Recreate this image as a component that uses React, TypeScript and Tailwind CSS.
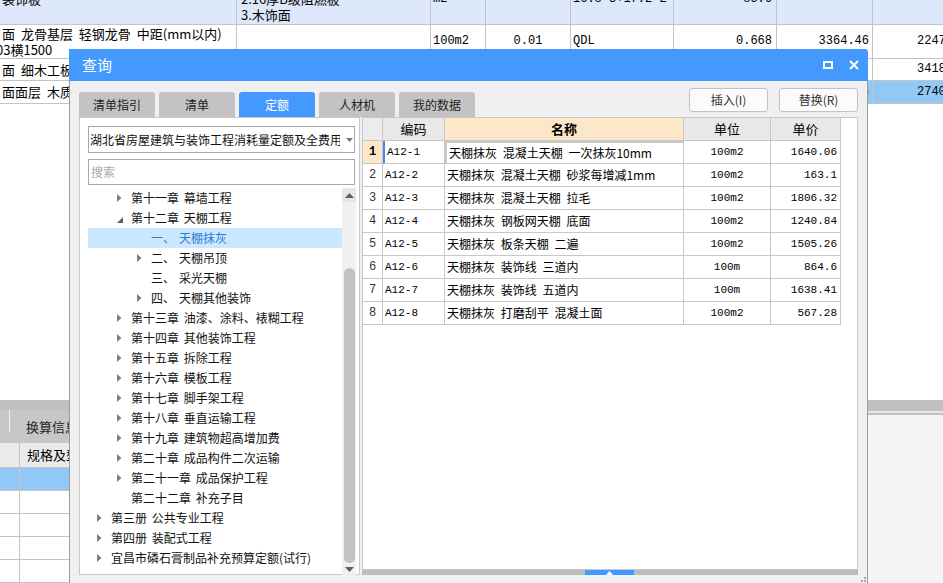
import React from "react";

// 查询 dialog over a spreadsheet (GLD style)

const cjk = "font-['Noto_Sans_CJK_SC',sans-serif]";
const mono = "font-['Liberation_Mono','Noto_Sans_CJK_SC',monospace]";

type Node = { l: number; t: string; t2?: string; a?: "r" | "d"; sel?: boolean };

const tree: Node[] = [
  { l: 1, t: "第十一章 幕墙工程", a: "r" },
  { l: 1, t: "第十二章 天棚工程", a: "d" },
  { l: 2, t: "一、", t2: "天棚抹灰", sel: true },
  { l: 2, t: "二、", t2: "天棚吊顶", a: "r" },
  { l: 2, t: "三、", t2: "采光天棚" },
  { l: 2, t: "四、", t2: "天棚其他装饰", a: "r" },
  { l: 1, t: "第十三章 油漆、涂料、裱糊工程", a: "r" },
  { l: 1, t: "第十四章 其他装饰工程", a: "r" },
  { l: 1, t: "第十五章 拆除工程", a: "r" },
  { l: 1, t: "第十六章 模板工程", a: "r" },
  { l: 1, t: "第十七章 脚手架工程", a: "r" },
  { l: 1, t: "第十八章 垂直运输工程", a: "r" },
  { l: 1, t: "第十九章 建筑物超高增加费", a: "r" },
  { l: 1, t: "第二十章 成品构件二次运输", a: "r" },
  { l: 1, t: "第二十一章 成品保护工程", a: "r" },
  { l: 1, t: "第二十二章 补充子目" },
  { l: 0, t: "第三册 公共专业工程", a: "r" },
  { l: 0, t: "第四册 装配式工程", a: "r" },
  { l: 0, t: "宜昌市磷石膏制品补充预算定额(试行)", a: "r" },
];

const rows = [
  ["A12-1", "天棚抹灰 混凝土天棚 一次抹灰10mm", "100m2", "1640.06"],
  ["A12-2", "天棚抹灰 混凝土天棚 砂浆每增减1mm", "100m2", "163.1"],
  ["A12-3", "天棚抹灰 混凝土天棚 拉毛", "100m2", "1806.32"],
  ["A12-4", "天棚抹灰 钢板网天棚 底面", "100m2", "1240.84"],
  ["A12-5", "天棚抹灰 板条天棚 二遍", "100m2", "1505.26"],
  ["A12-6", "天棚抹灰 装饰线 三道内", "100m", "864.6"],
  ["A12-7", "天棚抹灰 装饰线 五道内", "100m", "1638.41"],
  ["A12-8", "天棚抹灰 打磨刮平 混凝土面", "100m2", "567.28"],
];

const tabs = ["清单指引", "清单", "定额", "人材机", "我的数据"];

function Background() {
  const cell = "overflow-hidden border-r border-b border-[#c4c4c4]";
  const grid = "grid grid-cols-[237px_194px_55px_85px_103px_103px_96px_103px]";
  return (
    <div className={`flex h-full flex-col text-[13px] text-black ${cjk}`}>
      <div className={`${grid} h-[26px] bg-[#dde8fb]`}>
        <div className={cell}>
          <div className="-mt-[9px] pl-[2px] leading-[16px]">装饰板</div>
        </div>
        <div className={cell}>
          <div className="-mt-[9px] pl-[4px] leading-[16px]">
            <div>2.16厚B级阻燃板</div>
            <div>3.木饰面</div>
          </div>
        </div>
        <div className={cell}>
          <div className={`-mt-[9px] pl-[2px] leading-[16px] ${mono} text-[12px]`}>m2</div>
        </div>
        <div className={cell} />
        <div className={cell}>
          <div className={`-mt-[9px] pl-[2px] leading-[16px] ${mono} text-[12px]`}>16.8*3+17.2*2</div>
        </div>
        <div className={cell}>
          <div className={`-mt-[9px] pr-[4px] text-right leading-[16px] ${mono} text-[12px]`}>85.6</div>
        </div>
        <div className={cell} />
        <div className={cell} />
      </div>

      <div className={`${grid} h-[35px] bg-white`}>
        <div className={`${cell} pt-[1px] leading-[16px] [word-spacing:3px]`}>
          <div className="pl-[2px]">面 龙骨基层 轻钢龙骨 中距(mm以内)</div>
          <div className="-ml-[4px]">03横1500</div>
        </div>
        <div className={cell} />
        <div className={`${cell} flex items-center pl-[2px] ${mono} text-[12px]`}>100m2</div>
        <div className={`${cell} flex items-center justify-center ${mono} text-[12px]`}>0.01</div>
        <div className={`${cell} flex items-center pl-[2px] ${mono} text-[12px]`}>QDL</div>
        <div className={`${cell} flex items-center justify-end pr-[4px] ${mono} text-[12px]`}>0.668</div>
        <div className={`${cell} flex items-center justify-end pr-[3px] ${mono} text-[12px]`}>3364.46</div>
        <div className={`${cell} flex items-center pl-[44px] ${mono} text-[12px]`}>22473.59</div>
      </div>

      <div className={`${grid} h-[23px] bg-white`}>
        <div className={`${cell} flex items-center pl-[2px] [word-spacing:3px]`}>面 细木工板基层 钉在龙骨上</div>
        <div className={cell} />
        <div className={cell} />
        <div className={cell} />
        <div className={cell} />
        <div className={cell} />
        <div className={cell} />
        <div className={`${cell} flex items-center pl-[44px] ${mono} text-[12px]`}>3418.25</div>
      </div>

      <div className={`${grid} h-[24px] bg-white`}>
        <div className={`${cell} flex items-center pl-[2px] [word-spacing:3px]`}>面面层 木质装饰板</div>
        <div className={cell} />
        <div className={cell} />
        <div className={cell} />
        <div className={cell} />
        <div className={cell} />
        <div className={`${cell} flex items-center justify-end bg-[#92c8f6] pr-[3px] ${mono} text-[12px]`}>5423.15</div>
        <div className={`${cell} flex items-center bg-[#92c8f6] pl-[44px] ${mono} text-[12px]`}>2740.66</div>
      </div>

      <div className="h-[309px] bg-white" />

      <div className="flex flex-1">
        <div className="flex w-[500px] flex-col">
          <div className="h-[10px] bg-[#c0c0c0]" />
          <div className="flex h-[33px] items-center bg-[#c6c6c6]">
            <div className="ml-[9px] h-[22px] w-[1px] self-start bg-[#f2f2f2]" />
            <span className="ml-[16px] text-[13px] text-[#222]">换算信息</span>
          </div>
          <div className="flex h-[25px] border-b border-[#c4c4c4] bg-[#ebebeb]">
            <div className="w-[20px] border-r border-[#c4c4c4]" />
            <div className="flex items-center pl-[7px] text-[13px]">规格及型号</div>
          </div>
          <div className="flex h-[23px] border-b border-[#c4c4c4] bg-[#92c8f6]">
            <div className="w-[20px] border-r border-[#c4c4c4]" />
          </div>
          {[0, 1, 2, 3].map((i) => (
            <div key={i} className="flex h-[23px] border-b border-[#c4c4c4] bg-white">
              <div className="w-[20px] border-r border-[#c4c4c4]" />
            </div>
          ))}
        </div>
        <div className="flex flex-1 flex-col">
          <div className="h-[11px] bg-[#c0c0c0]" />
          <div className="h-[2px] bg-[#e8e8e8]" />
          <div className="h-[2px] bg-[#c0c0c0]" />
          <div className="flex-1 bg-[#f4f4f4]" />
        </div>
      </div>
    </div>
  );
}

function Arrow({ kind }: { kind?: "r" | "d" }) {
  if (kind === "r")
    return (
      <svg width="5" height="8" viewBox="0 0 5 8">
        <polygon points="0,0 4.5,4 0,8" fill="#7d7d7d" />
      </svg>
    );
  if (kind === "d")
    return (
      <svg width="6" height="6" viewBox="0 0 6 6" className="mt-[4px]">
        <polygon points="6,0 6,6 0,6" fill="#5f5f5f" />
      </svg>
    );
  return null;
}

function LeftPanel() {
  return (
    <div className={`flex w-[281px] flex-col border border-[#c8c8c8] bg-white ${cjk} text-[12px]`}>
      <div className="pl-[8px] pt-[8px]">
        <div className="flex h-[27px] w-[267px] items-center border border-[#a9a9a9]">
          <div className="w-[251px] overflow-hidden whitespace-nowrap pl-[1px] text-[#111]">
            湖北省房屋建筑与装饰工程消耗量定额及全费用基价表
          </div>
          <svg width="7" height="4" viewBox="0 0 7 4" className="ml-[6px]">
            <polygon points="0,0 7,0 3.5,4" fill="#777" />
          </svg>
        </div>
        <div className="mt-[6px] flex h-[26px] w-[267px] items-center border border-[#a9a9a9] pl-[2px] text-[#a8a8a8]">
          搜索
        </div>
      </div>
      <div className="mt-[3px] flex flex-1 pl-[8px]">
        <div className="w-[254px] overflow-hidden">
          {tree.map((n, i) => (
            <div
              key={i}
              className={`flex h-[20px] items-center whitespace-nowrap [word-spacing:2px] ${n.sel ? "bg-[#cce8ff] text-[#2f7bd9]" : "text-[#111]"}`}
            >
              <div
                className="flex h-full shrink-0 items-center"
                style={{ width: n.l * 20 + 23, paddingLeft: n.l * 20 + 9 }}
              >
                <Arrow kind={n.a} />
              </div>
              <span>{n.t}</span>
              {n.t2 && <span className="ml-[4px]">{n.t2}</span>}
            </div>
          ))}
        </div>
        <div className="flex w-[14px] flex-col bg-[#f0f0f0]">
          <div className="flex h-[14px] items-center justify-center bg-[#e6e6e6]">
            <svg width="9" height="5" viewBox="0 0 9 5">
              <polygon points="0,5 9,5 4.5,0" fill="#606060" />
            </svg>
          </div>
          <div className="mx-auto mt-[66px] h-[295px] w-[11px] rounded-full bg-[#c2c2c2]" />
          <div className="mt-auto flex h-[12px] items-center justify-center">
            <svg width="9" height="5" viewBox="0 0 9 5">
              <polygon points="0,0 9,0 4.5,5" fill="#606060" />
            </svg>
          </div>
        </div>
      </div>
    </div>
  );
}

function RightPanel() {
  const c = "border-r border-b border-[#c8c8c8] flex items-center overflow-hidden whitespace-nowrap";
  const g = "grid grid-cols-[20px_62px_239px_87px_70px] w-[478px]";
  return (
    <div className="flex w-[496px] flex-col">
      <div className="flex-1 border border-[#c8c8c8] bg-white">
        <div className={`${g} h-[23px] text-[13px] ${cjk}`}>
          <div className={`${c} bg-[#ececec]`} />
          <div className={`${c} justify-center bg-[#e8e8e8]`}>编码</div>
          <div className={`${c} justify-center bg-[#fde7c9] font-bold`}>名称</div>
          <div className={`${c} justify-center bg-[#e8e8e8]`}>单位</div>
          <div className={`${c} justify-center bg-[#e8e8e8]`}>单价</div>
        </div>
        {rows.map((r, i) => (
          <div key={i} className={`${g} h-[23px]`}>
            <div
              className={`${c} justify-center ${mono} text-[12px] ${i === 0 ? "bg-[#fde7c9] font-bold" : "bg-white text-[#333]"}`}
            >
              {i + 1}
            </div>
            <div
              className={`${c} pl-[2px] ${mono} text-[11px] ${i === 0 ? "border-l-2 border-l-[#3d8ef0] pl-[0px]" : ""}`}
            >
              {r[0]}
            </div>
            <div
              className={`${c} pl-[2px] ${cjk} text-[12px] [word-spacing:3px] ${i === 0 ? "border-2 border-[#6f6f6f]" : ""}`}
            >
              {r[1]}
            </div>
            <div className={`${c} justify-center ${mono} text-[11px]`}>{r[2]}</div>
            <div className={`${c} justify-end pr-[3px] ${mono} text-[11px]`}>{r[3]}</div>
          </div>
        ))}
      </div>
      <div className="flex h-[5px] bg-[#bdbdbd]">
        <div className="ml-[223px] flex w-[49px] items-end justify-center bg-[#4499ff]">
          <svg width="7" height="4" viewBox="0 0 7 4">
            <polygon points="0,4 7,4 3.5,0" fill="#fff" />
          </svg>
        </div>
      </div>
    </div>
  );
}

function Dialog() {
  return (
    <div className={`absolute left-[69px] top-[49px] flex h-[540px] w-[799px] flex-col ${cjk}`}>
      <div className="flex h-[32px] shrink-0 items-center justify-between rounded-tr-[3px] bg-[#4499ff] pl-[13px] pr-[9px]">
        <span className="text-[15px] text-white">查询</span>
        <div className="flex items-center gap-[16px]">
          <svg width="10" height="8" viewBox="0 0 10 8">
            <rect x="1" y="1" width="8" height="6" fill="none" stroke="#fff" strokeWidth="2" />
          </svg>
          <svg width="10" height="10" viewBox="0 0 10 10">
            <path d="M1 1 L9 9 M9 1 L1 9" stroke="#fff" strokeWidth="2" />
          </svg>
        </div>
      </div>
      <div className="relative flex flex-1 flex-col border-x border-[#9a9a9a] bg-[#f0f0f0] px-[9px]">
        <div className="flex h-[36px] shrink-0 items-start justify-between pt-[7px]">
          <div className="mt-[4px] flex gap-[4px]">
            {tabs.map((t) => (
              <div
                key={t}
                className={`flex h-[25px] w-[76px] items-center justify-center rounded-t-[3px] text-[12px] ${t === "定额" ? "bg-[#4499ff] text-white" : "bg-[#c3c3c3] text-[#222]"}`}
              >
                {t}
              </div>
            ))}
          </div>
          <div className="flex gap-[11px]">
            {["插入(I)", "替换(R)"].map((b) => (
              <div
                key={b}
                className="flex h-[24px] w-[79px] items-center justify-center rounded-[3px] border border-[#c2c2c2] bg-[#fbfbfb] text-[12px] text-[#333]"
              >
                {b}
              </div>
            ))}
          </div>
        </div>
        <div className="flex h-[458px] shrink-0 gap-[2px]">
          <LeftPanel />
          <RightPanel />
        </div>
        <svg width="10" height="10" viewBox="0 0 10 10" className="absolute left-[787px] top-[495px]">
          <rect x="7" y="1" width="2" height="2" fill="#a8a8a8" />
          <rect x="4" y="4" width="2" height="2" fill="#a8a8a8" />
          <rect x="7" y="4" width="2" height="2" fill="#a8a8a8" />
          <rect x="1" y="7" width="2" height="2" fill="#a8a8a8" />
          <rect x="4" y="7" width="2" height="2" fill="#a8a8a8" />
          <rect x="7" y="7" width="2" height="2" fill="#a8a8a8" />
        </svg>
      </div>
    </div>
  );
}

export default function App() {
  return (
    <div className="relative h-[583px] w-[943px] overflow-hidden bg-white">
      <Background />
      <Dialog />
    </div>
  );
}
